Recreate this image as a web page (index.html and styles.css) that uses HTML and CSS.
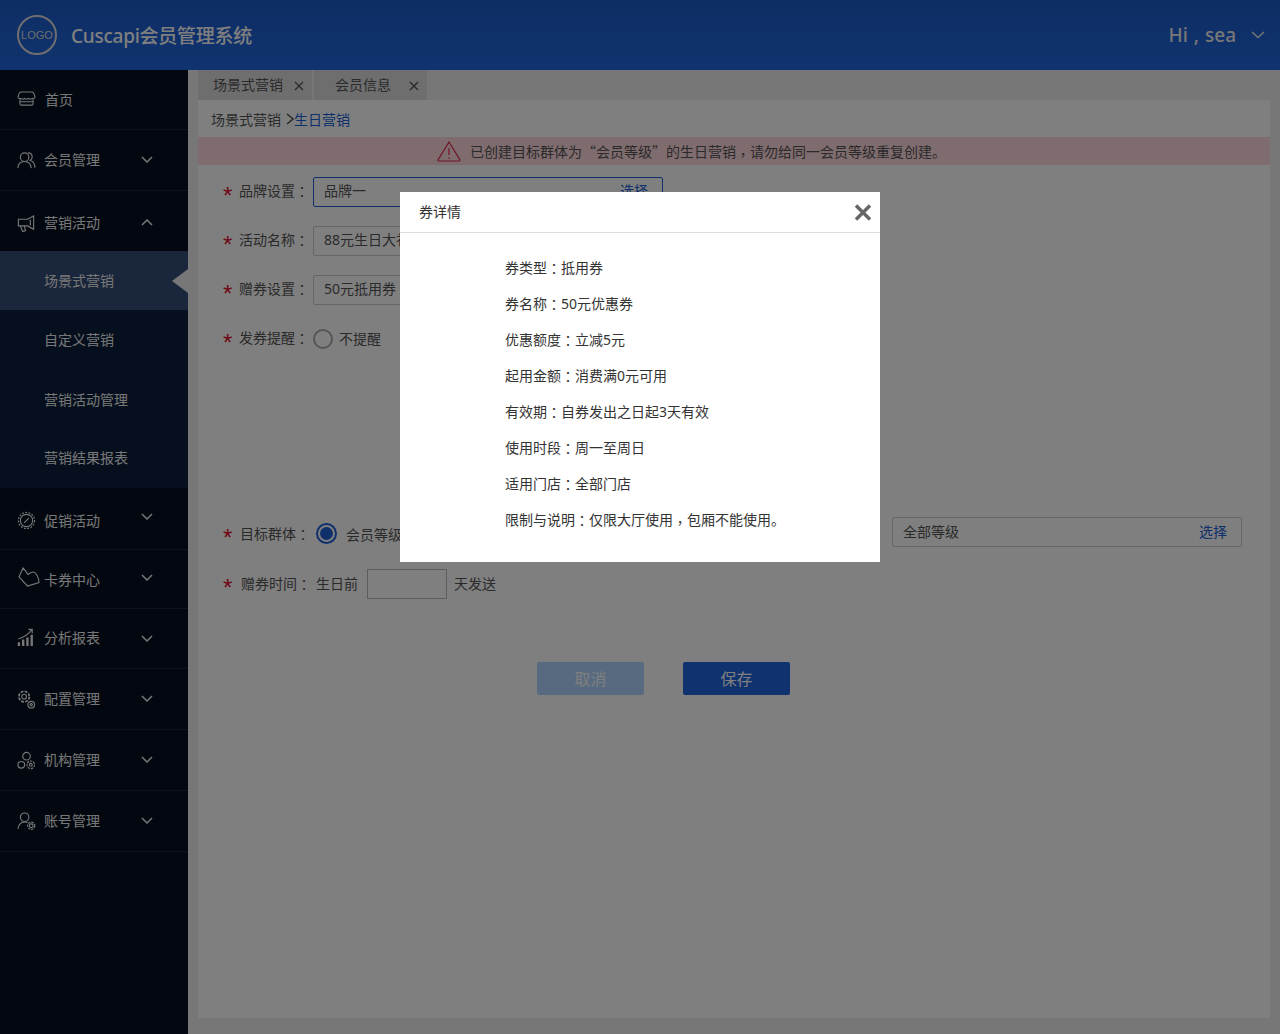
FILE: index.html
```html
<!DOCTYPE html>
<html lang="zh-CN">
<head>
    <meta charset="UTF-8">
    <title>Cuscapi会员管理系统</title>
    <link rel="stylesheet" href="styles.css">
</head>
<body>
    <header class="topbar">
        <div class="logo">LOGO</div>
        <div class="site-name">Cuscapi会员管理系统</div>
        <div class="user">
            <span>Hi , sea</span>
            <svg class="user-arrow" width="14" height="8" viewBox="0 0 14 8"><path d="M1 1l6 5.500L13 1"/></svg>
        </div>
    </header>

    <div class="layout">
        <nav class="sidebar">
            <a class="menu-item h60">
                <svg class="menu-icon icon-shop" viewBox="0 0 20 16"><path d="M4.500 1h11c1.500 0 3 2.500 3.500 5 0 1.500-1.500 2.500-3 2-1.500 1-3 .8-4-.2-1.200 1-2.800 1-4 0-1 1-2.500 1.200-4 .2-1.500.5-3-.5-3-2C1.500 3.500 3 1 4.500 1zM3 9v4.500c0 1 .5 1.500 1.500 1.500h11c1 0 1.500-.5 1.500-1.500V9M3 11.500h14"/></svg>
                <span class="menu-text text-home">首页</span>
            </a>
            <a class="menu-item">
                <svg class="menu-icon" viewBox="0 0 20 20"><circle cx="8" cy="6.500" r="4.500"/><path d="M1 18c0-4.500 3-7 7-7s6.500 2.500 7 7M11.500 2c2.500-.5 4.500 1.500 4.500 4 0 1.500-.8 3-2 3.700 2.800 1 4.800 4 5 8"/></svg>
                <span class="menu-text">会员管理</span>
                <svg class="chevron up1" viewBox="0 0 12 7"><path d="M1 1l5 5 5-5"/></svg>
            </a>
            <a class="menu-item h60 no-line">
                <svg class="menu-icon icon-down" viewBox="0 0 20 20"><path d="M17.500 2v14L11 12.500H1.500V5.500H11zM3.500 12.500l2.500 6 3-1-1.500-5M14 6v6"/></svg>
                <span class="menu-text text-low">营销活动</span>
                <svg class="chevron down1" viewBox="0 0 12 7"><path d="M1 6l5-5 5 5"/></svg>
            </a>
            <div class="submenu">
                <a class="sub-item active">场景式营销</a>
                <a class="sub-item">自定义营销</a>
                <a class="sub-item flat">营销活动管理</a>
                <a class="sub-item">营销结果报表</a>
            </div>
            <a class="menu-item h62">
                <svg class="menu-icon icon-down" viewBox="0 0 20 20"><circle cx="10" cy="10" r="6.500"/><circle cx="10" cy="10" r="8.500" stroke-dasharray="2 1.500"/><path d="M7.500 12.500l5-5M8 8h.1M12 12h.1"/></svg>
                <span class="menu-text text-low">促销活动</span>
                <svg class="chevron up2" viewBox="0 0 12 7"><path d="M1 1l5 5 5-5"/></svg>
            </a>
            <a class="menu-item h59">
                <svg class="icon-card" width="22" height="20" viewBox="0 0 22 20"><path d="M5 1L1 10l8.500 9L21 15.500C21 11 18 5 15 5c-2 0-4 2-5 2.500C9 6 7 3 5 1z"/></svg>
                <span class="menu-text text-flat">卡券中心</span>
                <svg class="chevron up2" viewBox="0 0 12 7"><path d="M1 1l5 5 5-5"/></svg>
            </a>
            <a class="menu-item h60">
                <svg class="menu-icon icon-up" viewBox="0 0 20 20"><path d="M2 19v-4M6.500 19v-7M11 19V10M15.500 19V7" stroke-width="2.500"/><path d="M1.500 11.500C7 10 11.500 7 15.500 2M12 1.500h4v4"/></svg>
                <span class="menu-text text-high">分析报表</span>
                <svg class="chevron" viewBox="0 0 12 7"><path d="M1 1l5 5 5-5"/></svg>
            </a>
            <a class="menu-item">
                <svg class="menu-icon" viewBox="0 0 20 20"><circle cx="7.500" cy="7" r="2.500"/><circle cx="7.500" cy="7" r="5.500" stroke-dasharray="3 1.300" stroke-width="1.800"/><circle cx="15" cy="15.500" r="3.500"/><circle cx="15" cy="15.500" r="1.200"/></svg>
                <span class="menu-text">配置管理</span>
                <svg class="chevron up1" viewBox="0 0 12 7"><path d="M1 1l5 5 5-5"/></svg>
            </a>
            <a class="menu-item">
                <svg class="menu-icon" viewBox="0 0 20 20"><circle cx="10" cy="5.500" r="4"/><circle cx="4.500" cy="14.500" r="3.500"/><circle cx="14.500" cy="14.500" r="4" stroke-dasharray="2.500 1"/><circle cx="14.500" cy="14.500" r="1.500"/></svg>
                <span class="menu-text">机构管理</span>
                <svg class="chevron up1" viewBox="0 0 12 7"><path d="M1 1l5 5 5-5"/></svg>
            </a>
            <a class="menu-item">
                <svg class="menu-icon" viewBox="0 0 20 20"><circle cx="8" cy="5.500" r="4.500"/><path d="M1 18c0-4 3-7.500 7-7.500 1.200 0 2.300.3 3 .7"/><circle cx="15" cy="14.500" r="2"/><circle cx="15" cy="14.500" r="3.800" stroke-dasharray="2.500 1"/></svg>
                <span class="menu-text">账号管理</span>
                <svg class="chevron up1" viewBox="0 0 12 7"><path d="M1 1l5 5 5-5"/></svg>
            </a>
        </nav>

        <main class="main">
            <div class="tabs">
                <div class="tab">场景式营销
                    <svg class="tab-close" viewBox="0 0 10 10"><path d="M1 1l8 8M9 1l-8 8"/></svg>
                </div>
                <div class="tab tab-second">会员信息
                    <svg class="tab-close" viewBox="0 0 10 10"><path d="M1 1l8 8M9 1l-8 8"/></svg>
                </div>
            </div>

            <section class="panel">
                <div class="crumbs">场景式营销
                    <svg class="crumb-arrow" width="8" height="12" viewBox="0 0 8 12"><path d="M1 1l6 5-6 5"/></svg>
                    <a class="link">生日营销</a>
                </div>

                <div class="alert">
                    <svg class="alert-icon" width="24" height="21" viewBox="0 0 24 21">
                        <path d="M12 1L1 19a1 1 0 0 0 1 1h20a1 1 0 0 0 1-1z"/>
                        <path d="M12 7v7M12 16.500v1.500"/>
                    </svg>
                    <span>已创建目标群体为“会员等级”的生日营销<span class="mid comma" lang="zh-TW">，</span>请勿给同一会员等级重复创建。</span>
                </div>

                <form class="form">
                    <div class="row">
                        <span class="star">*</span>
                        <label class="label">品牌设置<span class="mid" lang="zh-TW">：</span></label>
                        <div class="field focus">
                            <span>品牌一</span>
                            <a class="link">选择</a>
                        </div>
                    </div>
                    <div class="row">
                        <span class="star">*</span>
                        <label class="label">活动名称<span class="mid" lang="zh-TW">：</span></label>
                        <div class="field"><span>88元生日大礼包</span></div>
                    </div>
                    <div class="row">
                        <span class="star">*</span>
                        <label class="label">赠券设置<span class="mid" lang="zh-TW">：</span></label>
                        <div class="field"><span>50元抵用券</span></div>
                    </div>
                    <div class="row row-remind">
                        <span class="star">*</span>
                        <label class="label">发券提醒<span class="mid" lang="zh-TW">：</span></label>
                        <span class="radio"></span>
                        <span class="radio-text">不提醒</span>
                    </div>
                    <div class="row row-target">
                        <span class="star">*</span>
                        <label class="label">目标群体<span class="mid" lang="zh-TW">：</span></label>
                        <span class="radio checked"></span>
                        <span class="radio-text">会员等级</span>
                        <div class="field field-right">
                            <span>全部等级</span>
                            <a class="link">选择</a>
                        </div>
                    </div>
                    <div class="row row-time">
                        <span class="star">*</span>
                        <label class="label">赠券时间<span class="mid" lang="zh-TW">：</span></label>
                        <span class="before">生日前</span>
                        <span class="days"></span>
                        <span class="after">天发送</span>
                    </div>
                    <div class="actions">
                        <button type="button" class="btn btn-cancel">取消</button>
                        <button type="button" class="btn btn-save">保存</button>
                    </div>
                </form>
            </section>
        </main>
    </div>

    <div class="mask">
        <div class="dialog">
            <div class="dialog-head">
                <span>券详情</span>
                <svg class="dialog-close" width="18" height="17" viewBox="0 0 18 17"><path d="M2 1.500l14 14M16 1.500l-14 14"/></svg>
            </div>
            <ul class="dialog-body">
                <li>券类型<span class="mid" lang="zh-TW">：</span>抵用券</li>
                <li>券名称<span class="mid" lang="zh-TW">：</span>50元优惠券</li>
                <li>优惠额度<span class="mid" lang="zh-TW">：</span>立减5元</li>
                <li>起用金额<span class="mid" lang="zh-TW">：</span>消费满0元可用</li>
                <li>有效期<span class="mid" lang="zh-TW">：</span>自券发出之日起3天有效</li>
                <li>使用时段<span class="mid" lang="zh-TW">：</span>周一至周日</li>
                <li>适用门店<span class="mid" lang="zh-TW">：</span>全部门店</li>
                <li>限制与说明<span class="mid" lang="zh-TW">：</span>仅限大厅使用<span class="mid comma" lang="zh-TW">，</span>包厢不能使用。</li>
            </ul>
        </div>
    </div>
</body>
</html>
```

FILE: styles.css
```css
* {
    box-sizing: border-box;
}
html, body {
    height: 100%;
}
body {
    margin: 0;
    overflow: hidden;
    background: #eee;
    color: #555;
    font-family: "Noto Sans", "Noto Sans CJK SC", sans-serif;
    font-size: 14px;
}
a {
    text-decoration: none;
}
svg {
    fill: none;
    stroke: currentColor;
    flex: none;
}
/* centred punctuation, as in the original font */
.mid {
    display: inline-block;
    font-family: "Noto Sans CJK TC", sans-serif;
    line-height: 1;
    transform: translateY(1px);
}
.comma {
    transform: translateY(3px);
}

/* top bar */
.topbar {
    height: 70px;
    display: flex;
    align-items: center;
    padding: 0 15px 0 17px;
    background: linear-gradient(180deg, #1c5ac8, #2068e0);
    color: #fff;
}
.logo {
    width: 40px;
    height: 40px;
    border: 2px solid #ddd;
    border-radius: 50%;
    display: flex;
    align-items: center;
    justify-content: center;
    font-family: "Liberation Sans", sans-serif;
    font-size: 11px;
    color: #ddd;
}
.site-name {
    margin-left: 14px;
    font-size: 19px;
    font-weight: 500;
    letter-spacing: -0.25px;
}
.user {
    margin-left: auto;
    display: flex;
    align-items: center;
    font-size: 19px;
    font-weight: 500;
    word-spacing: 1px;
    color: #eee;
}
.user-arrow {
    margin-left: 15px;
    stroke-width: 1.5;
}

.layout {
    display: flex;
    height: calc(100% - 70px);
}

/* sidebar */
.sidebar {
    width: 188px;
    flex: none;
    background: #060e1e;
    color: #eee;
}
.menu-item {
    height: 61px;
    display: flex;
    align-items: center;
    padding: 0 35px 0 17px;
    border-bottom: 1px solid #1c2636;
}
.h59 { height: 59px; }
.h60 { height: 60px; }
.h62 { height: 62px; }
.no-line {
    border-bottom: 0;
}
.menu-icon {
    width: 19px;
    height: 19px;
    stroke-width: 1.2;
}
.icon-shop {
    height: 15px;
    margin-bottom: 2px;
}
.icon-down {
    margin-top: 4px;
}
.icon-up {
    margin-bottom: 2px;
}
.icon-card {
    margin: -4px -4px 0 1px;
    stroke-width: 1.1;
}
.menu-text {
    margin-left: 8px;
    padding-bottom: 2px;
    flex: 1;
}
.text-home {
    margin-left: 9px;
}
.text-flat {
    padding-bottom: 0;
}
.text-low {
    padding: 2px 0 0;
}
.text-high {
    padding-bottom: 4px;
}
.chevron {
    width: 12px;
    height: 7px;
    stroke-width: 1.5;
}
.up1 { margin-bottom: 2px; }
.up2 { margin-bottom: 4px; }
.down1 { margin-top: 2px; }
.submenu {
    background: #0a1e3a;
}
.sub-item {
    height: 59.25px;
    display: flex;
    align-items: center;
    padding: 0 0 2px 44px;
    position: relative;
}
.sub-item.flat {
    padding-bottom: 0;
}
.sub-item.active {
    background: #344c76;
}
.sub-item.active::after {
    content: "";
    position: absolute;
    right: 0;
    top: 18px;
    border: 12px solid transparent;
    border-left-width: 0;
    border-right: 16px solid #eee;
}

/* main area */
.main {
    flex: 1;
    min-width: 0;
    display: flex;
    flex-direction: column;
    padding: 0 10px 16px;
}
.tabs {
    height: 30px;
    display: flex;
    gap: 2px;
    flex: none;
}
.tab {
    width: 114px;
    display: flex;
    align-items: center;
    padding: 0 0 2px 15px;
    background: #ddd;
    position: relative;
}
.tab-second {
    width: 113px;
    padding-left: 21px;
}
.tab-close {
    position: absolute;
    right: 8px;
    top: 11px;
    width: 10px;
    height: 10px;
    stroke-width: 1.3;
}
.panel {
    flex: 1;
    background: #fff;
}
.crumbs {
    height: 37px;
    display: flex;
    align-items: center;
    padding-left: 13px;
}
.crumb-arrow {
    margin: 0 0 0 5px;
    stroke-width: 1.6;
}
.link {
    color: #2060d8;
}
.alert {
    height: 28px;
    display: flex;
    align-items: center;
    padding-left: 239px;
    background: #ffd8dd;
    font-family: "Noto Sans CJK SC", sans-serif;
}
.alert-icon {
    margin-right: 9px;
    color: #e0264a;
    stroke-width: 1.2;
}

/* form */
.form {
    padding: 12px 28px 0 25px;
}
.row {
    height: 30px;
    display: flex;
    align-items: center;
    margin-bottom: 19px;
}
.star {
    width: 16px;
    margin-top: 8px;
    color: #e0102e;
    font-family: "Liberation Sans", sans-serif;
    font-size: 24px;
    line-height: 22px;
}
.label {
    width: 74px;
    flex: none;
    padding-bottom: 4px;
}
.field {
    width: 350px;
    height: 30px;
    display: flex;
    align-items: center;
    justify-content: space-between;
    padding: 0 14px 4px 10px;
    border: 1px solid #ccc;
    border-radius: 2px;
}
.field.focus {
    border-color: #2060d8;
}
.field-right {
    margin-left: auto;
    padding-bottom: 2px;
}
.radio {
    width: 20px;
    height: 20px;
    flex: none;
    border: 2px solid #aaa;
    border-radius: 50%;
}
.radio.checked {
    width: 21px;
    height: 21px;
    margin: 2px 0 0 3px;
    padding: 2px;
    border-color: #2060d8;
    background: #2060d8 content-box;
}
.radio-text {
    margin-left: 6px;
    padding-bottom: 2px;
}
.row-remind {
    margin-bottom: 163px;
}
.row-target {
    margin-bottom: 22px;
}
.row-target .star {
    margin-top: 12px;
}
.row-target .label {
    padding: 2px 0 0 1px;
}
.row-target .radio-text {
    margin-left: 9px;
    padding: 4px 0 0;
}
.row-time .label {
    padding: 0 0 2px 2px;
    width: 77px;
}
.before {
    margin-right: 9px;
    padding-bottom: 2px;
}
.days {
    width: 80px;
    height: 30px;
    border: 1px solid #bbb;
}
.after {
    margin-left: 7px;
    padding-bottom: 2px;
}
.actions {
    display: flex;
    gap: 39px;
    margin: 63px 0 0 314px;
}
.btn {
    width: 107px;
    height: 33px;
    padding: 0 0 2px;
    border: 0;
    border-radius: 2px;
    font: inherit;
    font-size: 16px;
    color: #fff;
}
.btn-cancel {
    background: #aed5ff;
}
.btn-save {
    background: #2066de;
}

/* dialog */
.mask {
    position: fixed;
    inset: 0;
    display: flex;
    justify-content: center;
    align-items: flex-start;
    padding-top: 192px;
    background: rgba(0, 0, 0, 0.5);
}
.dialog {
    width: 480px;
    height: 370px;
    background: #fff;
    color: #333;
}
.dialog-head {
    height: 41px;
    display: flex;
    align-items: center;
    justify-content: space-between;
    padding: 0 8px 0 19px;
    border-bottom: 1px solid #ddd;
}
.dialog-head span {
    padding-bottom: 2px;
}
.dialog-close {
    color: #666;
    stroke-width: 3.5;
}
.dialog-body {
    list-style: none;
    margin: 0;
    padding: 17px 0 0 105px;
}
.dialog-body li {
    height: 36px;
    line-height: 36px;
}
```
